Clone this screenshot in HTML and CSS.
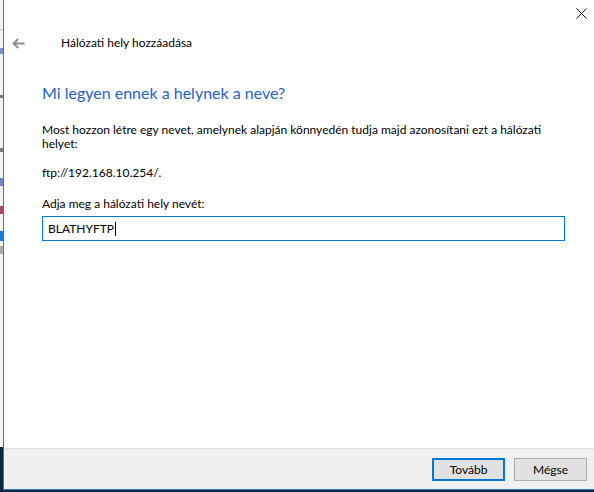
FILE: index.html
```html
<!DOCTYPE html>
<html lang="hu">
<head>
<meta charset="utf-8">
<title>Hálózati hely hozzáadása</title>
<link rel="stylesheet" href="styles.css">
</head>
<body>
<div class="desktop">
  <div class="strip"></div>
  <div class="window">
    <div class="main">
      <div class="titlebar">
        <svg class="close" width="11" height="11" viewBox="0 0 11 11"><path d="M0.5 0.5 L10.5 10.5 M10.5 0.5 L0.5 10.5" stroke="#111" stroke-width="1" fill="none"/></svg>
      </div>
      <div class="nav">
        <svg class="back" width="13" height="11" viewBox="0 0 13 11"><path d="M12.5 5.5 H1.8 M6.2 1 L1.6 5.5 L6.2 10" stroke="#8c8c8c" stroke-width="1.8" fill="none"/></svg>
        <span class="title">Hálózati hely hozzáadása</span>
      </div>
      <div class="content">
        <h1 class="heading">Mi legyen ennek a helynek a neve?</h1>
        <p class="desc">Most hozzon létre egy nevet, amelynek alapján könnyedén tudja majd azonosítani ezt a hálózati helyet:</p>
        <p class="addr">ftp://192.168.10.254/.</p>
        <label class="label">Adja meg a hálózati hely nevét:</label>
        <div class="input"><span class="value">BLATHYFTP</span><span class="caret"></span></div>
      </div>
    </div>
    <div class="footer">
      <button class="btn primary">Tovább</button>
      <button class="btn">Mégse</button>
    </div>
  </div>
</div>
</body>
</html>
```
FILE: styles.css
```css
html, body {
  margin: 0;
  padding: 0;
}
body {
  width: 594px;
  height: 492px;
  overflow: hidden;
  font-family: "Segoe UI", "Lato", "Noto Sans", sans-serif;
  font-size: 12px;
  color: #000;
}
.desktop {
  display: flex;
  align-items: flex-start;
  height: 492px;
  background: #0c2644;
}
.strip {
  width: 3px;
  height: 447px;
  flex: none;
  background:
    linear-gradient(to bottom,
      #f3f3f3 0, #f3f3f3 29px, #c8c8c8 29px, #c8c8c8 30px, #f3f3f3 30px,
      #f3f3f3 48px, #8090c8 48px, #8090c8 54px, #f3f3f3 54px,
      #f3f3f3 95px, #777 95px, #777 98px, #f3f3f3 98px,
      #f3f3f3 148px, #777 148px, #777 152px, #f3f3f3 152px,
      #f3f3f3 178px, #6f86cc 178px, #6f86cc 186px, #f3f3f3 186px,
      #f3f3f3 206px, #a05060 206px, #a05060 214px, #f3f3f3 214px,
      #f3f3f3 231px, #1f7ad6 231px, #1f7ad6 241px, #f3f3f3 241px,
      #f3f3f3 246px, #aaa 246px, #aaa 254px, #f3f3f3 254px,
      #f3f3f3 100%);
}
.window {
  box-sizing: border-box;
  width: 591px;
  height: 490px;
  flex: none;
  display: flex;
  flex-direction: column;
  border-left: 1px solid #2b7bd2;
  border-bottom: 1px solid #2b7bd2;
  background: #fff;
}
.main {
  flex: 1;
  background: #fff;
}
.titlebar {
  height: 30px;
  display: flex;
  justify-content: flex-end;
  align-items: flex-start;
}
.close {
  margin-top: 8px;
  margin-right: 7px;
}
.nav {
  height: 26px;
  display: flex;
  align-items: center;
}
.back {
  margin-left: 8px;
}
.title {
  margin-left: 36px;
  font-size: 12px;
  line-height: 16px;
}
.content {
  padding-left: 38px;
}
.heading {
  margin: 26px 0 0 0;
  font-size: 16px;
  font-weight: normal;
  line-height: 22px;
  color: #1f62c4;
}
.desc {
  margin: 19px 0 0 0;
  width: 530px;
  line-height: 14px;
}
.addr {
  margin: 15px 0 0 0;
  line-height: 14px;
}
.label {
  display: block;
  margin-top: 17px;
  line-height: 14px;
}
.input {
  box-sizing: border-box;
  margin-top: 5px;
  width: 523px;
  height: 25px;
  border: 1px solid #0078d7;
  padding-left: 5px;
  display: flex;
  align-items: center;
}
.value {
  line-height: 14px;
}
.caret {
  display: inline-block;
  width: 1px;
  height: 14px;
  background: #000;
  margin-left: 1px;
}
.footer {
  height: 41px;
  box-sizing: border-box;
  border-top: 1px solid #dfdfdf;
  background: #f0f0f0;
  display: flex;
  justify-content: flex-end;
  align-items: flex-start;
  padding-top: 9px;
  padding-right: 7px;
  gap: 9px;
}
.btn {
  box-sizing: border-box;
  width: 73px;
  height: 23px;
  margin: 0;
  padding: 0;
  background: #e1e1e1;
  border: 1px solid #adadad;
  font-family: "Segoe UI", "Lato", "Noto Sans", sans-serif;
  font-size: 12px;
  color: #000;
}
.btn.primary {
  border: 2px solid #0078d7;
}
```
